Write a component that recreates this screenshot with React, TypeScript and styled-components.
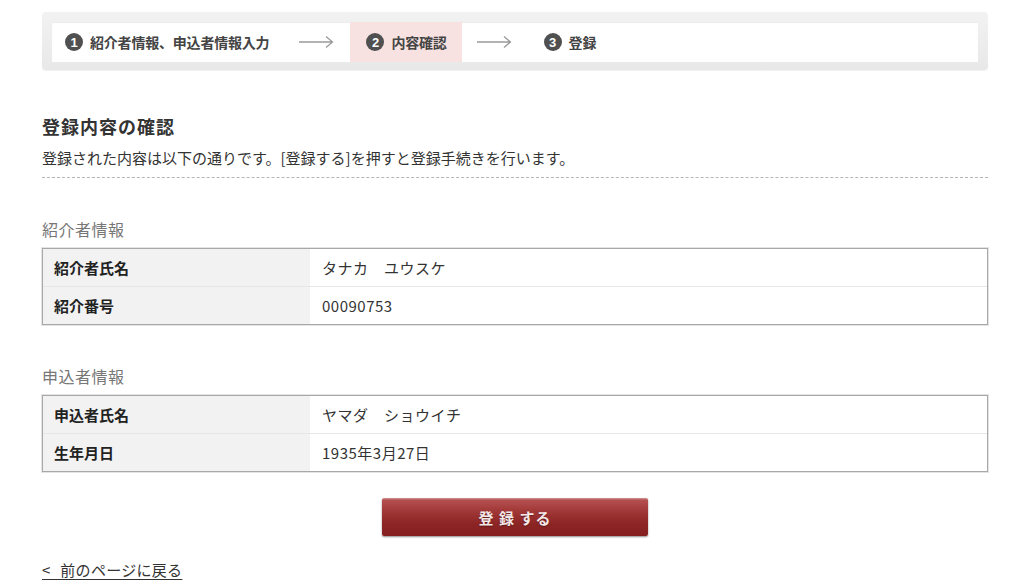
import React from "react";
import styled, { createGlobalStyle } from "styled-components";

const GlobalStyle = createGlobalStyle`
  html, body { margin: 0; padding: 0; background: #fff; }
  body {
    font-family: "Noto Sans CJK JP", "Noto Sans", "Liberation Sans", sans-serif;
    color: #333;
  }
`;

const Page = styled.div`
  width: 946px;
  margin-left: 42px;
  padding-top: 12px;
`;

const StepsFrame = styled.div`
  background: linear-gradient(#f2f2f2, #e8e8e8);
  border-radius: 4px;
  padding: 10px 10px 8px;
  box-shadow: 0 1px 1px rgba(0, 0, 0, 0.06);
`;

const StepsInner = styled.div`
  display: flex;
  align-items: stretch;
  height: 40px;
  background: #fff;
  box-shadow: inset 0 1px 1px rgba(0, 0, 0, 0.08);
`;

const Step = styled.div<{ $active?: boolean; $first?: boolean }>`
  display: flex;
  align-items: center;
  gap: 7px;
  padding: 0 15px 0 ${(p) => (p.$first ? "13px" : "16px")};
  background: ${(p) => (p.$active ? "#f8e1e1" : "transparent")};
  font-size: 14px;
  font-weight: 700;
  color: #444;
  letter-spacing: -0.2px;
`;

const StepNum = styled.span`
  width: 18px;
  height: 18px;
  border-radius: 50%;
  background: #505050;
  color: #fff;
  font-size: 13px;
  font-weight: 700;
  display: flex;
  align-items: center;
  justify-content: center;
  font-family: "Liberation Sans", sans-serif;
`;

const ArrowWrap = styled.div`
  display: flex;
  align-items: center;
  margin: 0 16px 0 14px;
`;

const Arrow = () => (
  <ArrowWrap>
    <svg width="36" height="14" viewBox="0 0 36 14">
      <path d="M1 7 H34 M28 1.5 L34.5 7 L28 12.5" fill="none" stroke="#9a9a9a" strokeWidth="1.3" />
    </svg>
  </ArrowWrap>
);

const Heading = styled.h2`
  margin: 43px 0 0;
  font-size: 18px;
  line-height: 26px;
  font-weight: 700;
  letter-spacing: 1px;
  color: #333;
`;

const Lead = styled.p`
  margin: 6px 0 0;
  font-size: 15px;
  line-height: 26px;
  color: #333;
`;

const Dashed = styled.div`
  margin-top: 6px;
  border-top: 1px dashed #b5b5b5;
`;

const SectionTitle = styled.h3<{ $top: number }>`
  margin: ${(p) => p.$top}px 0 0;
  font-size: 16px;
  line-height: 24px;
  font-weight: 400;
  color: #777;
  letter-spacing: 0.5px;
`;

const Table = styled.div`
  margin-top: 7px;
  border: 1px solid #a8a8a8;
  box-shadow: 0 0 0 1px #e4e4e4;
`;

const Row = styled.div`
  display: grid;
  grid-template-columns: 267px 1fr;
  height: 37px;
  & + & { border-top: 1px solid #e6e6e6; }
`;

const Label = styled.div`
  display: flex;
  align-items: center;
  padding-left: 11px;
  background: #f2f2f2;
  font-size: 15px;
  font-weight: 700;
  color: #222;
`;

const Value = styled.div`
  display: flex;
  align-items: center;
  padding-left: 12px;
  font-size: 15px;
  color: #333;
  letter-spacing: 0.5px;
`;

const ButtonRow = styled.div`
  display: flex;
  justify-content: center;
  margin-top: 26px;
`;

const SubmitButton = styled.button`
  width: 266px;
  height: 38px;
  border: none;
  border-radius: 2px;
  background: linear-gradient(#d49a9a 0px, #b55050 2px, #a33a3a 12px, #8c2424 26px, #862020 100%);
  box-shadow: 0 1px 2px rgba(0, 0, 0, 0.45);
  color: #f3e6e6;
  font-family: "Noto Sans CJK JP", sans-serif;
  font-size: 15px;
  font-weight: 700;
  letter-spacing: 1px;
  text-shadow: 0 1px 1px rgba(0, 0, 0, 0.35);
  cursor: pointer;
`;

const BackLink = styled.a`
  display: inline-block;
  margin-top: 23px;
  font-size: 15px;
  line-height: 22px;
  color: #333;
  text-decoration: underline;
  text-underline-offset: 3px;
  word-spacing: 6px;
  letter-spacing: 0.3px;
`;

const rows1 = [
  ["紹介者氏名", "タナカ　ユウスケ"],
  ["紹介番号", "00090753"],
];
const rows2 = [
  ["申込者氏名", "ヤマダ　ショウイチ"],
  ["生年月日", "1935年3月27日"],
];

export default function App() {
  return (
    <>
      <GlobalStyle />
      <Page>
        <StepsFrame>
          <StepsInner>
            <Step $first>
              <StepNum>1</StepNum>紹介者情報、申込者情報入力
            </Step>
            <Arrow />
            <Step $active>
              <StepNum>2</StepNum>内容確認
            </Step>
            <Arrow />
            <Step>
              <StepNum>3</StepNum>登録
            </Step>
          </StepsInner>
        </StepsFrame>

        <Heading>登録内容の確認</Heading>
        <Lead>登録された内容は以下の通りです。[登録する]を押すと登録手続きを行います。</Lead>
        <Dashed />

        <SectionTitle $top={39}>紹介者情報</SectionTitle>
        <Table>
          {rows1.map(([l, v]) => (
            <Row key={l}>
              <Label>{l}</Label>
              <Value>{v}</Value>
            </Row>
          ))}
        </Table>

        <SectionTitle $top={39}>申込者情報</SectionTitle>
        <Table>
          {rows2.map(([l, v]) => (
            <Row key={l}>
              <Label>{l}</Label>
              <Value>{v}</Value>
            </Row>
          ))}
        </Table>

        <ButtonRow>
          <SubmitButton>登 録 する</SubmitButton>
        </ButtonRow>

        <BackLink href="#">&lt; 前のページに戻る</BackLink>
      </Page>
    </>
  );
}
